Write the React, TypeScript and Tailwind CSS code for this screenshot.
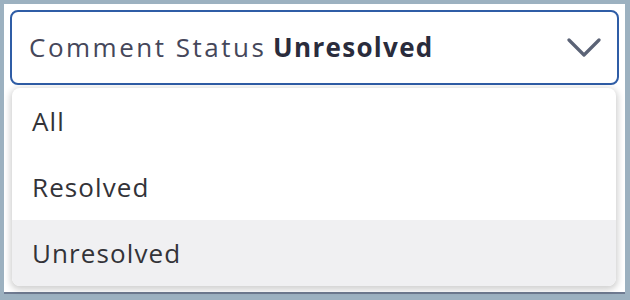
import React from "react";

export default function App() {
  const items = ["All", "Resolved", "Unresolved"];
  return (
    <div className="w-[630px] h-[300px] bg-[#9cb1c0] pt-[4px] pl-[4px] pr-[5px]" style={{ fontFamily: '"Open Sans", sans-serif' }}>
      <div className="bg-white h-[290px] pt-[6px] pl-[6px] pr-[6px] border-b-2 border-[#6f7b91]">
        <div className="h-[75px] border-2 border-[#2f5da6] rounded-[8px] flex items-center justify-between pl-[17px] pr-[16px]">
          <div className="text-[26px] text-[#45475a] whitespace-nowrap">
            <span className="tracking-[2.5px]">Comment Status</span>{" "}
            <span className="font-bold text-[#2a2c3c] tracking-[1.3px]">Unresolved</span>
          </div>
          <svg width="34" height="20" viewBox="0 0 34 20" fill="none">
            <path d="M2 2 L17 17 L32 2" stroke="#5b6376" strokeWidth="3.2" strokeLinecap="round" strokeLinejoin="round" />
          </svg>
        </div>
        <div className="mt-[3px] mx-[2px] w-[604px] rounded-[8px] bg-white shadow-[0_2px_6px_2px_rgba(0,0,0,0.18)] overflow-hidden">
          {items.map((it, i) => (
            <div
              key={it}
              className={`h-[66px] flex items-center pl-[20px] text-[26px] tracking-[1.1px] text-[#333338] ${i === 2 ? "bg-[#f0f0f2]" : ""}`}
            >
              {it}
            </div>
          ))}
        </div>
      </div>
    </div>
  );
}
